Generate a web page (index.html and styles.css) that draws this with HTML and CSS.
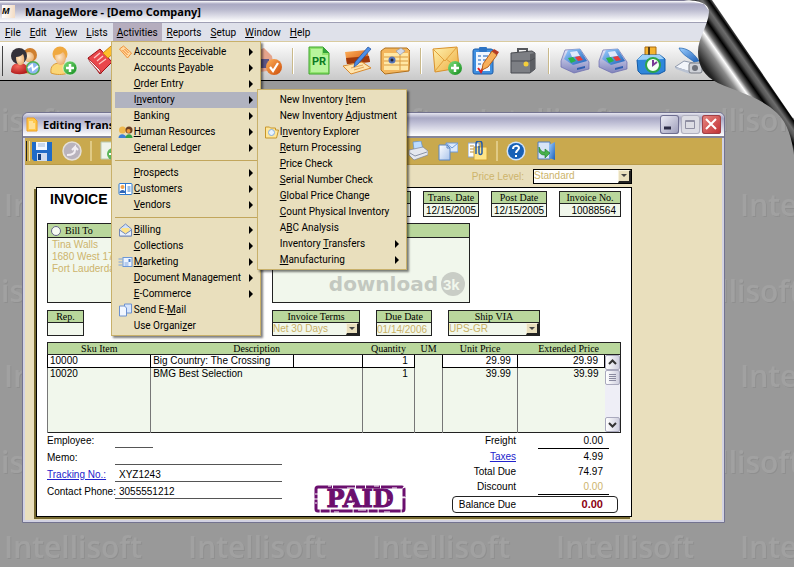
FILE: index.html
```html
<!DOCTYPE html>
<html lang="en">
<head>
    <meta charset="UTF-8">
    <meta name="viewport" content="width=device-width, initial-scale=1.0">
    <title>ManageMore - [Demo Company]</title>
    <link rel="stylesheet" href="styles.css">
</head>
<body>
    <!-- Icon sprite -->
    <svg class="sprite" width="0" height="0" aria-hidden="true">
        <defs>
            <linearGradient id="g-blue" x1="0" y1="0" x2="1" y2="1"><stop offset="0" stop-color="#9fd0ff"/><stop offset="1" stop-color="#1b5fb8"/></linearGradient>
            <linearGradient id="g-paper" x1="0" y1="0" x2="1" y2="1"><stop offset="0" stop-color="#ffffff"/><stop offset="1" stop-color="#a9c4ec"/></linearGradient>
            <linearGradient id="g-gold" x1="0" y1="0" x2="1" y2="1"><stop offset="0" stop-color="#fff3b0"/><stop offset="1" stop-color="#eda93c"/></linearGradient>
            <linearGradient id="g-orange" x1="0" y1="0" x2="1" y2="1"><stop offset="0" stop-color="#ffb35c"/><stop offset="1" stop-color="#cc4a06"/></linearGradient>
            <linearGradient id="g-green" x1="0" y1="0" x2="1" y2="1"><stop offset="0" stop-color="#7fe07a"/><stop offset="1" stop-color="#138a1e"/></linearGradient>
            <linearGradient id="g-lilac" x1="0" y1="0" x2="0" y2="1"><stop offset="0" stop-color="#e6e8fb"/><stop offset="1" stop-color="#8083bb"/></linearGradient>
            <radialGradient id="g-skin" cx="0.4" cy="0.4" r="0.7"><stop offset="0" stop-color="#ffe9c9"/><stop offset="1" stop-color="#e8a765"/></radialGradient>
            <radialGradient id="g-red" cx="0.4" cy="0.3" r="0.8"><stop offset="0" stop-color="#f56a5c"/><stop offset="1" stop-color="#a90f12"/></radialGradient>

            <symbol id="i-people" viewBox="0 0 30 30">
                <path d="M14 27c0-8 3-10 8-10s7 3 7 9c-4 2-11 2-15 1z" fill="#e9a13e"/>
                <circle cx="20" cy="9" r="7" fill="#cf7f2f"/><circle cx="19" cy="11" r="5" fill="url(#g-skin)"/>
                <path d="M1 26c0-7 3-9 9-9 5 0 8 3 8 9-4 3-13 3-17 0z" fill="url(#g-red)"/>
                <circle cx="9" cy="10" r="8" fill="#33313a"/><path d="M6 11c3 0 5-1 7-3 2 4 2 10-2 11-3 1-5-3-5-8z" fill="url(#g-skin)"/>
                <circle cx="23" cy="22" r="7" fill="#4fb04f"/><circle cx="23" cy="22" r="5.5" fill="#8db6f0"/>
                <path d="M18 22l4-3 1 5 5-4" fill="none" stroke="#fff" stroke-width="2"/>
            </symbol>
            <symbol id="i-person-add" viewBox="0 0 30 30">
                <path d="M3 27c-1-7 3-10 9-10s9 4 8 10c-5 2-12 2-17 0z" fill="#fbd676" stroke="#d99a38"/>
                <circle cx="12" cy="8" r="7.500" fill="#f0a940"/><path d="M7 9c4 0 6-1 8-3 4 3 4 12-2 13-4 0-6-5-6-10z" fill="url(#g-skin)"/>
                <circle cx="22" cy="22" r="7" fill="url(#g-green)" stroke="#fff" stroke-width="0.500"/>
                <path d="M22 18v8M18 22h8" stroke="#fff" stroke-width="2.500"/>
            </symbol>
            <symbol id="i-red-book" viewBox="0 0 30 30">
                <path d="M2 12L14 3l12 13-12 12z" fill="#e9474c" stroke="#9c1116"/>
                <path d="M2 12l2 4 11 12-1-4z" fill="#fff" stroke="#9c1116" stroke-width="0.700"/>
                <path d="M8 12l6-5M11 15l6-5M13 18l7-5" stroke="#ffc9c6" stroke-width="1.300"/>
                <path d="M17 7l8-7 5 5-8 7z" fill="#ffbf2b" stroke="#d28a10"/>
            </symbol>
            <symbol id="i-box-check" viewBox="0 0 30 30">
                <path d="M2 6l10-4 8 8 2 14-14 2z" fill="#e5a48c"/>
                <path d="M8 13l9 0 0 9-9 0z" fill="#5c5585"/>
                <circle cx="22" cy="21" r="8" fill="url(#g-orange)"/>
                <path d="M18 21l3 4 5-8" fill="none" stroke="#fff" stroke-width="2.200"/>
            </symbol>
            <symbol id="i-pr" viewBox="0 0 30 30">
                <path d="M5 1h14l6 6v21H5z" fill="#8fe36c" stroke="#3fa52c"/>
                <path d="M7 3h11v6h6v17H7z" fill="#b8f59c"/><path d="M19 1v6h6z" fill="#32a23c"/>
                <text x="8" y="19" font-family="Roboto, sans-serif" font-weight="bold" font-size="11" fill="#0b7a22">PR</text>
            </symbol>
            <symbol id="i-checkbook" viewBox="0 0 30 30">
                <path d="M3 6l22-2 3 12-23 2z" fill="url(#g-orange)"/><path d="M4 12l23-2 1 6-23 2z" fill="#a13a0b"/>
                <path d="M1 20l19-4 9 6-20 6z" fill="#ffe4ac" stroke="#d98a2e"/><path d="M9 22l12-3M12 24l10-3" stroke="#e2a558"/>
                <path d="M26 1l3 2-13 15-4 3 1-5z" fill="#4c8ee6" stroke="#1f4e9b" stroke-width="0.700"/>
            </symbol>
            <symbol id="i-ledger" viewBox="0 0 30 30">
                <path d="M1 5l4-3h22l3 3-1 20-24 3-4-4z" fill="#f3b65c" stroke="#b0701d"/>
                <path d="M4 7h24v17H4z" fill="#ffe7a4"/>
                <path d="M4 11h24M4 15h24M4 19h24M20 7v17" stroke="#d99b41"/>
                <circle cx="12" cy="14" r="3.500" fill="#5674b8"/><circle cx="12" cy="14" r="1.500" fill="#223"/>
                <path d="M16 5l5-3 4 3-5 4z" fill="#d2d9e8" stroke="#8c93a8" stroke-width="0.600"/>
            </symbol>
            <symbol id="i-mail-add" viewBox="0 0 30 30">
                <path d="M1 3l24-2 2 21-24 4z" fill="url(#g-gold)" stroke="#d9912a"/>
                <path d="M1 3l12 12L25 1M3 25l9-11M26 22l-12-9" fill="none" stroke="#e1a03c"/>
                <circle cx="23" cy="22" r="7" fill="url(#g-green)"/><path d="M23 18v8M19 22h8" stroke="#fff" stroke-width="2.500"/>
            </symbol>
            <symbol id="i-clipboard" viewBox="0 0 30 30">
                <rect x="3" y="3" width="20" height="25" rx="2" fill="#3f8fe0" stroke="#1a5ba8"/>
                <path d="M6 6h14v19H6z" fill="#eff6ff"/><rect x="9" y="1" width="8" height="5" rx="1" fill="#2e74c4"/>
                <path d="M8 10h3M8 14h3M8 18h3M13 10h5M13 14h4" stroke="#5b8fd0" stroke-width="1.500"/>
                <path d="M8 22l3 4 3-6" fill="none" stroke="#e02020" stroke-width="2"/>
                <path d="M22 5l5 4-9 12-6 3 1-6z" fill="#f7b05b" stroke="#b8601a"/><path d="M22 5l2-2 5 3-2 3z" fill="#b53a24"/>
            </symbol>
            <symbol id="i-briefcase" viewBox="0 0 30 30">
                <path d="M10 6V3h9v3" fill="none" stroke="#55575c" stroke-width="2"/>
                <path d="M3 7l21-2 3 2v16l-5 4H3z" fill="#7d7f84" stroke="#494b50"/><path d="M22 8l5-1v16l-5 4z" fill="#5c5e63"/>
                <path d="M3 15h19l5-3" fill="none" stroke="#4b4d52"/><circle cx="18" cy="18" r="2.500" fill="#f5cf3a"/>
            </symbol>
            <symbol id="i-register" viewBox="0 0 30 30">
                <path d="M1 15l4-11 15-1 9 13v7l-15 4-13-6z" fill="url(#g-lilac)" stroke="#6a6cae" stroke-width="0.700"/>
                <path d="M4 13L8 4l12-1 7 12-14 4z" fill="url(#g-blue)"/>
                <path d="M10 6l7-1 3 5-8 1z" fill="#dfe9fb"/><path d="M8 12l5-1 3 4-5 2z" fill="#28b34a"/><path d="M15 11l5-1 3 4-5 1z" fill="#e83b3b"/>
                <path d="M17 22l8-2v2l-8 2z" fill="#2d5db0"/>
            </symbol>
            <symbol id="i-time-register" viewBox="0 0 30 30">
                <path d="M9 1h11v10H9z" fill="#f6b42f" stroke="#a86a10"/><path d="M12 1h2v9h-2z" fill="#59411a"/>
                <path d="M1 14l5-5h18l5 4v12l-6 3H5l-3-3z" fill="#2f86da" stroke="#145aa6"/><path d="M1 14l5-5h18l4 4z" fill="#9bd0fa"/>
                <circle cx="17" cy="19" r="7" fill="#f4fff4" stroke="#2ea548" stroke-width="2"/><path d="M17 14v5l4-3" fill="none" stroke="#7a3a96" stroke-width="2"/>
            </symbol>
            <symbol id="i-scanner" viewBox="0 0 30 30">
                <path d="M5 2c8 0 14 4 20 13l-5 1C17 13 8 9 5 2z" fill="url(#g-blue)" stroke="#1c62ad" stroke-width="0.700"/>
                <path d="M1 21l9-6 14 3-8 8z" fill="#f2f5fa" stroke="#8f99ac"/><path d="M1 21l15 4v3L2 23z" fill="#b9c2d2"/>
                <rect x="15" y="17" width="13" height="10" rx="2" fill="#cfd2d8" stroke="#777b84"/><circle cx="21" cy="22" r="3" fill="#6c7079"/>
            </symbol>

            <symbol id="i-save" viewBox="0 0 20 20">
                <path d="M0 1h20v19H2l-2-2z" fill="#1f6bc8"/><path d="M4 1h11v8H4z" fill="#f4f8ff"/><path d="M6 3h7M6 5h7" stroke="#9db7dc"/>
                <path d="M5 12h10v8H5z" fill="#cfdcf0"/><path d="M6 13h3v6H6z" fill="#123e80"/>
            </symbol>
            <symbol id="i-undo" viewBox="0 0 20 20">
                <circle cx="10" cy="10" r="9" fill="#b9b3bd" stroke="#e4dfd8" stroke-width="1.500"/><path d="M5 14c5 0 8-2 8-5V6l-3 3M13 6l3 3" fill="none" stroke="#f2eef2" stroke-width="2"/>
            </symbol>
            <symbol id="i-doc-add" viewBox="0 0 20 20">
                <path d="M1 1h10l3 3v14H1z" fill="#eef3ea" stroke="#b7c9b0"/><circle cx="13" cy="13" r="6" fill="#5cb558"/><path d="M13 9v8M9 13h8" stroke="#fff" stroke-width="2"/>
            </symbol>
            <symbol id="i-print" viewBox="0 0 20 20">
                <path d="M5 1l8-1 2 8-9 1z" fill="#bcdcff" stroke="#5e92d0" stroke-width="0.700"/>
                <path d="M1 9l14-3 5 4v4l-14 5-5-5z" fill="#e4e7ee" stroke="#7c8496" stroke-width="0.700"/><path d="M2 12l5 3 12-4" fill="none" stroke="#8b93a6"/>
            </symbol>
            <symbol id="i-mail-doc" viewBox="0 0 20 20">
                <path d="M8 2h12v9H8z" fill="#dceafd" stroke="#6e9ad8"/><path d="M8 2l6 5 6-5" fill="none" stroke="#6e9ad8"/><path d="M1 4h8l3 3v12H1z" fill="url(#g-paper)" stroke="#5a86c4"/><path d="M9 4v3h3" fill="none" stroke="#5a86c4"/>
            </symbol>
            <symbol id="i-attach" viewBox="0 0 20 20">
                <path d="M0 2h11v14H0z" fill="#fff" stroke="#8aa3c8"/><path d="M2 5h4M2 8h4M2 11h5" stroke="#b78b3a"/><path d="M6 6h13v13H6z" fill="#ffe487" stroke="#d2a437"/>
                <path d="M8 13V3a2 2 0 0 1 6 0v9a1 1 0 0 1-3 0V5" fill="none" stroke="#245ba8" stroke-width="1.500"/>
            </symbol>
            <symbol id="i-help" viewBox="0 0 20 20">
                <circle cx="10" cy="10" r="9.500" fill="#cfe2fb"/><circle cx="10" cy="10" r="8" fill="#1760b6"/>
                <path d="M7 8c0-4 6-4 6-1 0 2-3 2-3 5M10 14v2" fill="none" stroke="#fff" stroke-width="2"/>
            </symbol>
            <symbol id="i-exit" viewBox="0 0 20 20">
                <path d="M2 1h12v17H2z" fill="#d7e5f8" stroke="#4e7dbd"/><path d="M13 4l6-3v18l-6-2z" fill="url(#g-blue)"/>
                <path d="M3 6v5c2 3 4 3 6 3v3l5-5-5-4v3c-3 0-4-1-6-5z" fill="#45b04b" stroke="#1d7a2a" stroke-width="0.600"/>
            </symbol>

            <symbol id="m-tag" viewBox="0 0 14 14"><path d="M1 4l4-3 8 7-4 5z" fill="#ffd9a0" stroke="#f0913a"/><path d="M4 5l5 5M6 4l4 4" stroke="#ef7f25"/></symbol>
            <symbol id="m-people" viewBox="0 0 14 14">
                <circle cx="4" cy="5" r="3.500" fill="#eeb84e"/><path d="M0 13c0-5 7-5 8 0z" fill="#3d7fd8"/>
                <circle cx="10.500" cy="5" r="3.500" fill="#6b3d20"/><path d="M7 13c0-5 7-5 7 0z" fill="#36a246"/><circle cx="10" cy="6" r="2" fill="#f09a3a"/>
            </symbol>
            <symbol id="m-card" viewBox="0 0 14 14"><rect x="0.500" y="1.500" width="13" height="11" rx="1" fill="#fff" stroke="#2f7ad0"/><path d="M7 2v10M9 5h3M9 7h3M9 9h3" stroke="#2f7ad0"/><circle cx="4" cy="5" r="2" fill="#f0a24c"/><path d="M1 11c0-4 6-4 6 0z" fill="#2f66b8"/></symbol>
            <symbol id="m-mail" viewBox="0 0 14 14"><path d="M1 6l6-5 6 5v7H1z" fill="#cfe0fa" stroke="#7489b8"/><path d="M3 5h8v4l-4 2-4-2z" fill="#ffe48a"/><path d="M1 7l6 4 6-4v6H1z" fill="#e6effd" stroke="#7489b8"/></symbol>
            <symbol id="m-market" viewBox="0 0 14 14"><path d="M0 4h4M0 7h4M0 10h4" stroke="#7fa4dd"/><rect x="4.500" y="2.500" width="9" height="9" fill="#edf4ff" stroke="#6b97d8"/><path d="M6 8h4M6 10h4" stroke="#7fa4dd"/><path d="M10 4h2v3h-2z" fill="#4b82cf"/></symbol>
            <symbol id="m-docs" viewBox="0 0 14 14"><path d="M6 1h7v9H6z" fill="#d7e5fb" stroke="#6d92d0"/><path d="M1 3h5l2 2v8H1z" fill="#f2f7ff" stroke="#6d92d0"/></symbol>
            <symbol id="m-folder" viewBox="0 0 14 14"><path d="M1 2h4l1 1h5v2h3l-2 8H1z" fill="#ffe79a" stroke="#c8962a"/><circle cx="7" cy="7.500" r="3" fill="#e8f3ff" stroke="#86aede"/></symbol>
        </defs>
    </svg>

    <!-- Desktop wallpaper -->
    <svg class="wallpaper" aria-hidden="true">
        <defs>
            <pattern id="wall" x="4" y="13" width="184" height="171" patternUnits="userSpaceOnUse">
                <g class="wall-dark">
                    <text x="1" y="33">Intellisoft</text>
                    <text x="-76" y="119">Intellisoft</text>
                    <text x="108" y="119">Intellisoft</text>
                </g>
                <g class="wall-light">
                    <text x="0" y="32">Intellisoft</text>
                    <text x="-77" y="118">Intellisoft</text>
                    <text x="107" y="118">Intellisoft</text>
                </g>
            </pattern>
        </defs>
        <rect width="100%" height="100%" fill="url(#wall)"/>
    </svg>

    <header class="app-header">
        <div class="app-title">
            <span class="app-logo">M</span>
            <h1>ManageMore - [Demo Company]</h1>
        </div>
        <nav class="menubar">
            <div class="menu"><button><u>F</u>ile</button></div>
            <div class="menu"><button><u>E</u>dit</button></div>
            <div class="menu"><button><u>V</u>iew</button></div>
            <div class="menu"><button><u>L</u>ists</button></div>
            <div class="menu open">
                <button><u>A</u>ctivities</button>
                <ul class="dropdown">
                    <li class="has-sub"><svg><use href="#m-tag"/></svg><button>Accounts <u>R</u>eceivable</button></li>
                    <li class="has-sub"><button>Accounts <u>P</u>ayable</button></li>
                    <li class="has-sub"><button><u>O</u>rder Entry</button></li>
                    <li class="has-sub selected"><button>I<u>n</u>ventory</button>
                        <ul class="dropdown submenu">
                            <li><button>New Inventory <u>I</u>tem</button></li>
                            <li><button>New Inventory <u>A</u>djustment</button></li>
                            <li><svg><use href="#m-folder"/></svg><button>I<u>n</u>ventory Explorer</button></li>
                            <li><button><u>R</u>eturn Processing</button></li>
                            <li><button><u>P</u>rice Check</button></li>
                            <li><button><u>S</u>erial Number Check</button></li>
                            <li><button><u>G</u>lobal Price Change</button></li>
                            <li><button><u>C</u>ount Physical Inventory</button></li>
                            <li><button>A<u>B</u>C Analysis</button></li>
                            <li class="has-sub"><button>Inventory <u>T</u>ransfers</button></li>
                            <li class="has-sub"><button><u>M</u>anufacturing</button></li>
                        </ul>
                    </li>
                    <li class="has-sub"><button><u>B</u>anking</button></li>
                    <li class="has-sub"><svg><use href="#m-people"/></svg><button><u>H</u>uman Resources</button></li>
                    <li class="has-sub"><button><u>G</u>eneral Ledger</button></li>
                    <li class="divider"></li>
                    <li class="has-sub"><button><u>P</u>rospects</button></li>
                    <li class="has-sub"><svg><use href="#m-card"/></svg><button><u>C</u>ustomers</button></li>
                    <li class="has-sub"><button><u>V</u>endors</button></li>
                    <li class="divider"></li>
                    <li class="has-sub"><svg><use href="#m-mail"/></svg><button><u>B</u>illing</button></li>
                    <li class="has-sub"><button><u>C</u>ollections</button></li>
                    <li class="has-sub"><svg><use href="#m-market"/></svg><button><u>M</u>arketing</button></li>
                    <li class="has-sub"><button><u>D</u>ocument Management</button></li>
                    <li class="has-sub"><button><u>E</u>-Commerce</button></li>
                    <li><svg><use href="#m-docs"/></svg><button>Send E-<u>M</u>ail</button></li>
                    <li><button>Use Organi<u>z</u>er</button></li>
                </ul>
            </div>
            <div class="menu"><button><u>R</u>eports</button></div>
            <div class="menu"><button><u>S</u>etup</button></div>
            <div class="menu"><button><u>W</u>indow</button></div>
            <div class="menu"><button><u>H</u>elp</button></div>
        </nav>
        <div class="toolbar">
            <button><svg><use href="#i-people"/></svg></button>
            <button><svg><use href="#i-person-add"/></svg></button>
            <button><svg><use href="#i-red-book"/></svg></button>
            <button><svg><use href="#i-ledger"/></svg></button>
            <button><svg><use href="#i-clipboard"/></svg></button>
            <button><svg><use href="#i-mail-add"/></svg></button>
            <span class="sep"></span>
            <button><svg><use href="#i-box-check"/></svg></button>
            <span class="sep"></span>
            <button><svg><use href="#i-pr"/></svg></button>
            <button><svg><use href="#i-checkbook"/></svg></button>
            <button><svg><use href="#i-ledger"/></svg></button>
            <span class="sep"></span>
            <button><svg><use href="#i-mail-add"/></svg></button>
            <button><svg><use href="#i-clipboard"/></svg></button>
            <button><svg><use href="#i-briefcase"/></svg></button>
            <span class="sep"></span>
            <button><svg><use href="#i-register"/></svg></button>
            <button><svg><use href="#i-register"/></svg></button>
            <button><svg><use href="#i-time-register"/></svg></button>
            <button><svg><use href="#i-scanner"/></svg></button>
        </div>
    </header>

    <main class="window">
        <div class="window-title">
            <svg class="window-icon" viewBox="0 0 12 15"><path d="M1 1h7l3 3v10H1z" fill="#ffc94d" stroke="#f0a020"/><path d="M3 5h4M3 7h6M3 9h6M3 11h6" stroke="#fff7dd"/></svg>
            <h2>Editing Trans</h2>
            <button class="win-btn"><svg viewBox="0 0 19 19"><path d="M4 13h7" stroke="#2b2b45" stroke-width="3"/></svg></button>
            <button class="win-btn disabled"><svg viewBox="0 0 19 19"><path d="M4.500 5.500h9v8h-9zM4 6.500h10" fill="none" stroke="#8f8fa3"/></svg></button>
            <button class="win-btn close"><svg viewBox="0 0 19 19"><path d="M4 4l10 10M14 4L4 14" stroke="#fff" stroke-width="2"/></svg></button>
        </div>
        <div class="window-toolbar">
            <div class="group">
                <button><svg><use href="#i-save"/></svg></button>
                <button><svg><use href="#i-undo"/></svg></button>
            </div>
            <div class="group">
                <button><svg><use href="#i-doc-add"/></svg></button>
                <button><svg><use href="#i-mail-doc"/></svg></button>
                <button><svg><use href="#i-undo"/></svg></button>
                <button><svg><use href="#i-attach"/></svg></button>
                <button><svg><use href="#i-save"/></svg></button>
                <button><svg><use href="#i-undo"/></svg></button>
            </div>
            <div class="group">
                <button><svg><use href="#i-doc-add"/></svg></button>
                <button><svg><use href="#i-mail-doc"/></svg></button>
                <button><svg><use href="#i-attach"/></svg></button>
                <button><svg><use href="#i-undo"/></svg></button>
                <button><svg><use href="#i-print"/></svg></button>
                <button><svg><use href="#i-mail-doc"/></svg></button>
                <button><svg><use href="#i-attach"/></svg></button>
            </div>
            <div class="group">
                <button><svg><use href="#i-help"/></svg></button>
                <button><svg><use href="#i-exit"/></svg></button>
            </div>
        </div>

        <div class="client">
            <div class="price-level">
                <label for="price-level">Price Level:</label>
                <span class="combo"><select id="price-level"><option>Standard</option></select><i class="arrow"></i></span>
            </div>

            <form class="invoice">
                <div class="invoice-top">
                    <h3>INVOICE</h3>
                    <div class="field date">
                        <label for="order-date"></label>
                        <input id="order-date" type="text" value="">
                    </div>
                    <div class="field date">
                        <label for="trans-date">Trans. Date</label>
                        <input id="trans-date" type="text" value="12/15/2005">
                    </div>
                    <div class="field date">
                        <label for="post-date">Post Date</label>
                        <input id="post-date" type="text" value="12/15/2005">
                    </div>
                    <div class="field number">
                        <label for="invoice-no">Invoice No.</label>
                        <input id="invoice-no" type="text" value="10088564">
                    </div>
                </div>

                <div class="columns addresses">
                    <div class="address">
                        <div class="address-title"><input id="bill-to" type="radio"><label for="bill-to">Bill To</label></div>
                        <address>Tina Walls<br>1680 West 17<br>Fort Lauderdal</address>
                    </div>
                    <div class="address">
                        <div class="address-title"></div>
                        <div class="brand">download
                            <svg viewBox="0 0 26 26"><circle cx="13" cy="13" r="12"/><text x="3" y="19">3k</text></svg>
                        </div>
                    </div>
                </div>

                <div class="columns terms">
                    <div class="field rep">
                        <label for="rep">Rep.</label>
                        <input id="rep" type="text" value="">
                    </div>
                    <div class="terms-row">
                        <div class="field invoice-terms muted">
                            <label for="terms">Invoice Terms</label>
                            <span class="combo"><select id="terms"><option>Net 30 Days</option></select><i class="arrow"></i></span>
                        </div>
                        <div class="field date muted">
                            <label for="due-date">Due Date</label>
                            <input id="due-date" type="text" value="01/14/2006">
                        </div>
                        <div class="field ship-via muted">
                            <label for="ship-via">Ship VIA</label>
                            <span class="combo"><select id="ship-via"><option>UPS-GR</option></select><i class="arrow"></i></span>
                        </div>
                    </div>
                </div>

                <table class="items">
                    <colgroup>
                        <col class="c-sku"><col class="c-desc"><col class="c-extra"><col class="c-qty"><col class="c-um"><col class="c-unit"><col class="c-ext"><col class="c-scroll">
                    </colgroup>
                    <thead>
                        <tr>
                            <th>Sku Item</th>
                            <th colspan="2">Description</th>
                            <th>Quantity</th>
                            <th>UM</th>
                            <th>Unit Price</th>
                            <th colspan="2">Extended Price</th>
                        </tr>
                    </thead>
                    <tbody>
                        <tr class="current">
                            <td>10000</td>
                            <td>Big Country: The Crossing</td>
                            <td></td>
                            <td class="num">1</td>
                            <td class="um"></td>
                            <td class="num">29.99</td>
                            <td class="num">29.99</td>
                            <td class="scroll" rowspan="3">
                                <div class="scrollbar">
                                    <button type="button"><svg viewBox="0 0 13 13"><path d="M3 8l3.500-3.500L10 8" fill="none" stroke="#333" stroke-width="2"/></svg></button>
                                    <button type="button"><svg viewBox="0 0 13 13"><path d="M3 3.500h7M3 5.500h7M3 7.500h7M3 9.500h7" stroke="#8a8aa0"/></svg></button>
                                    <span class="track"></span>
                                    <button type="button"><svg viewBox="0 0 13 13"><path d="M3 5l3.500 3.500L10 5" fill="none" stroke="#333" stroke-width="2"/></svg></button>
                                </div>
                            </td>
                        </tr>
                        <tr>
                            <td>10020</td>
                            <td colspan="2">BMG Best Selection</td>
                            <td class="num">1</td>
                            <td></td>
                            <td class="num">39.99</td>
                            <td class="num">39.99</td>
                        </tr>
                        <tr class="filler">
                            <td></td><td colspan="2"></td><td></td><td></td><td></td><td></td>
                        </tr>
                    </tbody>
                </table>

                <div class="invoice-bottom">
                    <div class="details">
                        <div class="detail"><label for="employee">Employee:</label><input id="employee" class="short" type="text" value=""></div>
                        <div class="detail"><label for="memo">Memo:</label><input id="memo" type="text" value=""></div>
                        <div class="detail"><label for="tracking"><a href="#">Tracking No.:</a></label><input id="tracking" type="text" value="XYZ1243"></div>
                        <div class="detail"><label for="phone">Contact Phone:</label><input id="phone" type="text" value="3055551212"></div>
                    </div>

                    <svg class="stamp" viewBox="0 0 92 28">
                        <rect x="2" y="2" width="88" height="24" rx="2" class="stamp-frame"/>
                        <text x="46" y="22">PAID</text>
                        <path d="M14 1h3M33 3h8M60 1h5M78 3h5M1 9h3M1 18h2M88 12h3M20 27h5M44 25h8M70 27h6M22 10h1M38 18h3M58 8h2M74 15h2" class="stamp-wear"/>
                    </svg>

                    <div class="totals">
                        <div class="total"><span>Freight</span><b class="ruled">0.00</b></div>
                        <div class="total"><span><a href="#">Taxes</a></span><b>4.99</b></div>
                        <div class="total"><span>Total Due</span><b>74.97</b></div>
                        <div class="total"><span>Discount</span><b class="ruled discount">0.00</b></div>
                        <div class="total balance"><span>Balance Due</span><b>0.00</b></div>
                    </div>
                </div>
            </form>
        </div>
    </main>

    <!-- Page curl in the top right corner -->
    <svg class="curl" viewBox="0 0 110 160" aria-hidden="true">
        <defs>
            <linearGradient id="fold" gradientUnits="userSpaceOnUse" x1="29" y1="0" x2="-8" y2="26">
                <stop offset="0" stop-color="#777"/>
                <stop offset="0.080" stop-color="#000"/>
                <stop offset="0.200" stop-color="#6d6d6d"/>
                <stop offset="0.280" stop-color="#555"/>
                <stop offset="0.380" stop-color="#000"/>
                <stop offset="0.500" stop-color="#6e6e6e"/>
                <stop offset="0.580" stop-color="#fff"/>
                <stop offset="0.720" stop-color="#8a8a8a"/>
                <stop offset="1" stop-color="#222"/>
            </linearGradient>
        </defs>
        <path d="M0 0h110v118L100 116 20 4z" fill="#fff"/>
        <path d="M0 0C16 0 25 4 25 12 24 26 14 38 14 52 14 66 20 76 34 83 54 92 78 98 93 113 104 124 108 138 110 156V120L28 0z" fill="url(#fold)"/>
    </svg>
</body>
</html>
```
FILE: styles.css
```css
* {
    box-sizing: border-box;
}
body {
    margin: 0;
    min-height: 100vh;
    background: #999;
    font-family: "Liberation Sans", Arial, sans-serif;
    font-size: 10px;
    color: #000;
    overflow: hidden;
}
h1, h2, h3, ul {
    margin: 0;
    padding: 0;
}
button, input, select {
    font: inherit;
    color: inherit;
    margin: 0;
    padding: 0;
    border: 0;
    background: none;
    border-radius: 0;
}
a {
    color: #2222cc;
}
.sprite {
    position: absolute;
}
.wallpaper {
    position: absolute;
    inset: 0;
    width: 100%;
    height: 100%;
    z-index: -1;
    font-family: "Open Sans", sans-serif;
    font-size: 30px;
    font-weight: 600;
}
.wall-dark {
    fill: #8f8f8f;
}
.wall-light {
    fill: #a1a1a1;
}

/* Application header */
.app-header {
    position: relative;
    z-index: 2;
    font-family: Roboto, Tahoma, sans-serif;
    border-bottom: 1px solid #000;
}
.app-title {
    display: flex;
    align-items: center;
    gap: 10px;
    height: 23px;
    padding-left: 2px;
    border-top: 1px solid #7b7993;
    border-bottom: 1px solid #9f9fb4;
    background: linear-gradient(#fff 0, #a9a8c2 3px, #b8b8cd 40%, #fff);
}
.app-title h1 {
    font: bold 11px/20px "Noto Sans", Tahoma, sans-serif;
}
.app-logo {
    width: 13px;
    height: 13px;
    background: linear-gradient(90deg, #fff, #f3dcc4);
    font: italic bold 9px/13px "Liberation Sans", sans-serif;
}
.menubar {
    display: flex;
    gap: 1px;
    height: 18px;
    padding-left: 1px;
    background: #dfe1ea;
}
.menu {
    position: relative;
}
.menu > button {
    height: 18px;
    padding: 0 4px;
    line-height: 17px;
}
.menu.open > button {
    background: #b5adbe;
}
.dropdown {
    position: absolute;
    top: 18px;
    left: -2px;
    width: 150px;
    padding: 2px 3px 1px;
    list-style: none;
    background: #e9dfbd;
    border: 1px solid #c8b06a;
    box-shadow: 2px 2px 2px rgba(0, 0, 0, 0.5);
    z-index: 5;
}
.dropdown li {
    position: relative;
    display: flex;
    align-items: center;
    height: 16px;
    padding-left: 19px;
}
.dropdown li > svg {
    width: 15px;
    height: 14px;
    margin-left: -16px;
    margin-right: 1px;
}
.dropdown li > button {
    flex: 1;
    text-align: left;
    line-height: 16px;
    white-space: nowrap;
}
.dropdown li.selected {
    background: #b1b3c0;
}
.has-sub::after {
    content: "";
    margin-right: 4px;
    border: 4px solid transparent;
    border-left-color: #000;
    border-right-width: 0;
}
.dropdown .divider {
    height: 9px;
    padding: 0;
}
.divider::before {
    content: "";
    flex: 1;
    height: 1px;
    background: #c2a65c;
}
.submenu {
    top: -3px;
    left: 142px;
}

.toolbar {
    display: flex;
    align-items: center;
    gap: 8px;
    height: 39px;
    padding-left: 2px;
    border-top: 1px solid #d9cba0;
    background: linear-gradient(#fdfdfd, #c9c9c9);
}
.toolbar::before {
    content: "";
    width: 1px;
    height: 30px;
    margin-right: -1px;
    background: #444;
}
.toolbar button, .toolbar svg {
    display: block;
    flex: none;
    width: 30px;
    height: 30px;
}
.toolbar .sep {
    flex: none;
    width: 6px;
    height: 26px;
    background: linear-gradient(90deg, transparent 2px, #c9b98a 2px, #c9b98a 3px, #fff 3px, #fff 4px, transparent 4px);
}

/* Transaction window */
.window {
    margin: 31px 69px 0 22px;
    padding: 0 2px 2px;
    border: 1px solid #73738f;
    border-radius: 6px 6px 0 0;
    background: #d2d2e2;
}
.window-title {
    display: flex;
    align-items: center;
    gap: 2px;
    height: 25px;
    margin: 0 -2px;
    padding: 0 3px;
    border-bottom: 2px solid #85859a;
    border-radius: 6px 6px 0 0;
    background: linear-gradient(#e6e6f0, #a8a8c4 5px, #c6c6da 50%, #fff);
    font-family: "Noto Sans", Tahoma, sans-serif;
}
.window-icon {
    width: 12px;
    height: 15px;
    margin-right: 3px;
}
.window-title h2 {
    flex: 1;
    font-size: 11px;
}
.win-btn, .win-btn svg {
    display: block;
    width: 19px;
    height: 19px;
}
.win-btn {
    border-radius: 3px;
    background: linear-gradient(135deg, #f0f0f8, #9a9ab8);
    box-shadow: inset 0 0 0 1px #6e6e90;
}
.win-btn.disabled {
    background: #dcdce4;
    box-shadow: inset 0 0 0 1px #b0b0c0;
}
.win-btn.close {
    background: linear-gradient(135deg, #e88a84, #c02c30);
    box-shadow: inset 0 0 0 1px #a04048;
}
.window-toolbar {
    display: flex;
    align-items: center;
    height: 27px;
    background: #c9a94e;
    border-bottom: 1px solid #b89a48;
}
.window-toolbar::before {
    content: "";
    width: 2px;
    height: 20px;
    margin-left: 1px;
    margin-right: -8px;
    border-left: 1px solid #222;
    border-right: 1px solid #f3e5b4;
}
.group {
    display: flex;
    gap: 10px;
    padding: 0 8px;
    border-left: 2px solid #e0ca85;
}
.group:first-of-type {
    border-left-color: transparent;
}
.group button, .group svg {
    display: block;
    width: 20px;
    height: 20px;
}
.client {
    padding: 0 90px 3px 11px;
    background: #e9dfbd;
}
.price-level {
    display: flex;
    justify-content: flex-end;
    align-items: center;
    gap: 9px;
    height: 22px;
    color: #cdb46b;
}
.combo {
    display: flex;
    height: 12px;
}
.combo select {
    flex: 1;
    min-width: 0;
    appearance: none;
    line-height: 12px;
}
.price-level .combo {
    width: 99px;
    height: 15px;
    border: 1px solid #000;
    background: #fff;
}
.arrow {
    display: flex;
    align-items: center;
    justify-content: center;
    width: 13px;
    background: #e9dfbd;
    border: 1px solid #f8f2dc;
    border-right: 2px solid #222;
    border-bottom: 2px solid #222;
}
.arrow::before {
    content: "";
    border: 3px solid transparent;
    border-top-color: #444;
    border-bottom-width: 0;
}

/* Invoice form */
.invoice {
    padding: 3px 10px 3px;
    background: #fff;
    border: 1px solid #000;
    box-shadow: -2px 2px 0 #74682f;
}
.invoice-top {
    display: flex;
    gap: 12px;
}
.invoice h3 {
    flex: 1;
    padding-left: 3px;
    font-size: 14px;
    line-height: 16px;
}
.field {
    border: 1px solid #222;
    background: #f1f7ec;
}
.field label {
    display: block;
    height: 12px;
    border-bottom: 1px solid #222;
    background: #b9d79c;
    font: 10px/11px "Liberation Serif", serif;
    text-align: center;
}
.field input {
    display: block;
    width: 100%;
    height: 12px;
    padding: 0 2px;
}
.field.muted input, .field.muted select {
    color: #c9b165;
}
.field.muted input {
    padding: 0;
}
.date {
    width: 56px;
}
.number {
    width: 62px;
}
.number input {
    padding-right: 4px;
    text-align: right;
}
.columns {
    display: grid;
    grid-template-columns: 198fr 198fr 124fr;
    column-gap: 27px;
}
.addresses {
    margin-top: 6px;
}
.address {
    display: flex;
    flex-direction: column;
    height: 80px;
    border: 1px solid #222;
    background: #f1f7ec;
}
.address-title {
    display: flex;
    align-items: center;
    gap: 4px;
    height: 14px;
    padding-left: 3px;
    border-bottom: 1px solid #222;
    background: #b9d79c;
    font: 10px/12px "Liberation Serif", serif;
}
.address-title input {
    appearance: none;
    width: 10px;
    height: 10px;
    border: 1px solid #668;
    border-radius: 50%;
    background: #f6fbf3;
}
.address address {
    padding: 1px 4px;
    font-style: normal;
    line-height: 12px;
    color: #cdb46b;
    white-space: nowrap;
}
.brand {
    display: flex;
    align-items: center;
    justify-content: flex-end;
    gap: 2px;
    margin-top: auto;
    padding: 0 3px 5px 0;
    font: bold 20px/26px "DejaVu Sans", sans-serif;
    color: #c3c8c0;
}
.brand svg {
    width: 26px;
    height: 26px;
    fill: #c9cdc6;
}
.brand text {
    font: bold 15px "Liberation Sans", sans-serif;
    fill: #f1f7ec;
}
.terms {
    margin-top: 7px;
}
.terms-row {
    grid-column: 2 / 4;
    display: flex;
    gap: 16px;
}
.rep {
    width: 37px;
}
.invoice-terms {
    width: 88px;
}
.ship-via {
    width: 92px;
}

.items {
    width: 100%;
    margin-top: 6px;
    table-layout: fixed;
    border-collapse: collapse;
    border: 1px solid #222;
    background: #f1f7ec;
}
.c-sku { width: 18%; }
.c-desc { width: 25%; }
.c-extra { width: 12%; }
.c-qty { width: 9%; }
.c-um { width: 5%; }
.c-unit { width: 13%; }
.c-scroll { width: 16px; }
.items th {
    height: 12px;
    padding: 0;
    background: #b9d79c;
    font: 10px/11px "Liberation Serif", serif;
    border-bottom: 1px solid #222;
}
.items td {
    height: 13px;
    padding: 0 2px;
    line-height: 12px;
    white-space: nowrap;
    border-left: 1px solid #777;
}
.items .current td {
    background: #fff;
    border: 1px solid #000;
}
.items .current .um {
    background: none;
    border-bottom: 0;
}
.items .num {
    padding-right: 6px;
    text-align: right;
}
.items .filler td {
    height: 52px;
}
.items .current .scroll {
    padding: 0;
    border: 0;
    background: #eeeef6;
}
.scrollbar {
    display: flex;
    flex-direction: column;
    height: 77px;
}
.scrollbar button {
    height: 15px;
    border: 1px solid #a9a9bd;
    border-radius: 2px;
    background: linear-gradient(90deg, #fff, #cfcfdf);
}
.scrollbar svg {
    display: block;
    width: 13px;
    height: 13px;
}
.track {
    flex: 1;
}

.invoice-bottom {
    display: flex;
    gap: 32px;
}
.details {
    display: flex;
    flex-direction: column;
    gap: 2px;
    width: 235px;
}
.detail {
    display: flex;
    height: 15px;
}
.detail label {
    width: 68px;
    line-height: 15px;
    white-space: nowrap;
}
.detail input {
    flex: 1;
    min-width: 0;
    padding-left: 4px;
    border-bottom: 1px solid #555;
}
.detail .short {
    flex: none;
    width: 38px;
}
.stamp {
    align-self: flex-end;
    width: 92px;
    height: 28px;
}
.stamp-frame {
    fill: none;
    stroke: #6b0f6e;
    stroke-width: 3;
    stroke-dasharray: 14 1 22 1 9 1;
}
.stamp text {
    font: bold 24px "DejaVu Serif", serif;
    text-anchor: middle;
    fill: #6b0f6e;
    stroke: #6b0f6e;
}
.stamp-wear {
    stroke: #fff;
}
.totals {
    width: 166px;
    margin-left: auto;
    margin-right: 3px;
}
.total {
    display: grid;
    grid-template-columns: 1fr 71px;
    column-gap: 22px;
    padding-right: 9px;
    line-height: 15px;
    text-align: right;
    white-space: nowrap;
}
.total b {
    padding-right: 6px;
    font-weight: normal;
}
.total .ruled {
    border-bottom: 1px solid #000;
}
.total .discount {
    color: #cdb46b;
}
.total.balance {
    margin-top: 1px;
    padding-right: 8px;
    border: 1px solid #222;
    border-radius: 4px;
}
.total.balance b {
    font-weight: bold;
    font-size: 11px;
    color: #8b0010;
}

.curl {
    position: absolute;
    top: 0;
    right: 0;
    width: 110px;
    height: 160px;
    z-index: 6;
}
```
